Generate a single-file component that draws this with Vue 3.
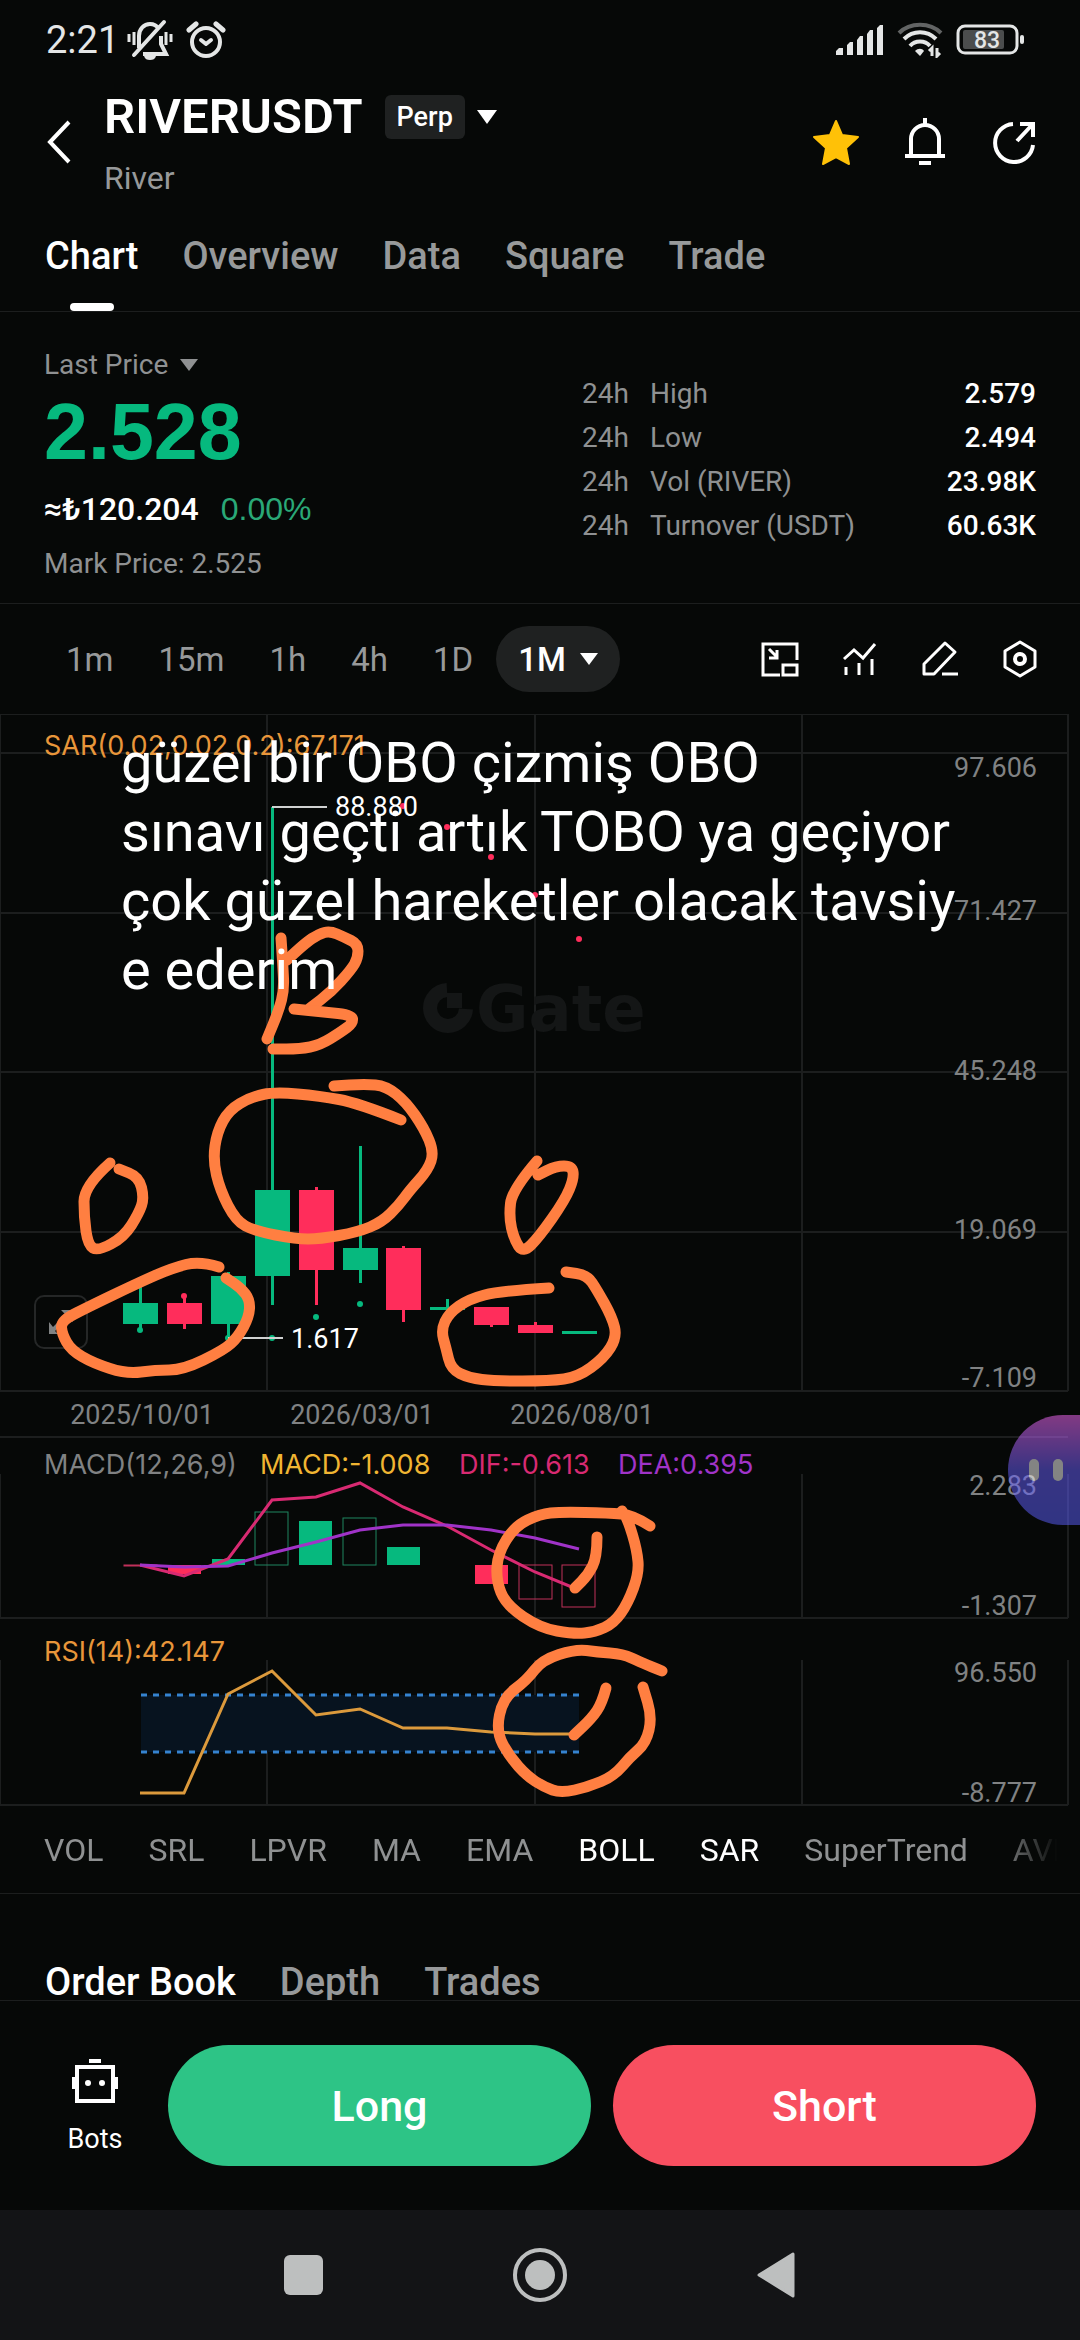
<template>
  <div class="screen">
    <header class="status">
      <div class="status-side">
        <span class="clock">2:21</span>
        <svg width="46" height="42" viewBox="0 0 46 42" aria-hidden="true">
          <g fill="none" stroke="#e4e6e6" stroke-width="4">
            <path d="M12 29V17c0-7 5-12 11-12 4 0 7 2 9 5M34 17v8l5 10H16" />
            <path d="M7 36 37 3" stroke-linecap="round" />
            <path d="M2 15v8M7 13v13M39 13v13M44 15v8" stroke-width="3" />
          </g>
          <path d="M17 37h12c-1 3-3 4-6 4s-5-1-6-4z" fill="#e4e6e6" />
        </svg>
        <svg width="40" height="40" viewBox="0 0 40 40" aria-hidden="true">
          <g fill="none" stroke="#e4e6e6" stroke-width="4" stroke-linecap="round" stroke-linejoin="round">
            <circle cx="20" cy="22" r="14" />
            <path d="M3 10 10 4M37 10 30 4" stroke-width="5" />
            <path d="m15 20 5 4 5-4" />
          </g>
        </svg>
      </div>
      <div class="status-side">
        <svg width="48" height="32" viewBox="0 0 48 32" fill="#e4e6e6" aria-hidden="true">
          <path d="M0 31v-4l3-3h4v7zM11 31V21l3-3h3v13zM21 31V16l3-4h3v19zM31 31V10l3-4h3v25zM41 31V4l3-3h3v30z" />
        </svg>
        <svg width="46" height="36" viewBox="0 0 46 36" aria-hidden="true">
          <g fill="none" stroke="#e4e6e6" stroke-width="4">
            <path d="M2 11c11-11 31-11 42 0" stroke="#626464" />
            <path d="M7 17c9-9 23-9 32 0M13 24c5-6 15-6 20 0" />
            <path d="M35 34v-8l-3 3M40 26v8l3-3" stroke-width="3" />
          </g>
          <path d="M18 29c3-3 7-3 9 0l-4 5z" fill="#e4e6e6" />
        </svg>
        <svg width="70" height="32" viewBox="0 0 70 32" aria-hidden="true">
          <rect x="2" y="2" width="59" height="27" rx="7" fill="none" stroke="#e4e6e6" stroke-width="3" />
          <rect x="7" y="6" width="41" height="19" rx="2" fill="#4b4d4d" />
          <rect x="64" y="11" width="4" height="9" rx="2" fill="#e4e6e6" />
          <text x="31" y="24" class="battery">83</text>
        </svg>
      </div>
    </header>

    <div class="titlebar">
      <button class="plain" aria-label="Back">
        <svg width="26" height="44" viewBox="0 0 26 44"><path d="M23 2 4 22l19 20" fill="none" stroke="#fff" stroke-width="4" /></svg>
      </button>
      <div class="pair">
        <h1>RIVERUSDT</h1>
        <button class="plain contract"><span class="badge">Perp</span><i class="caret big"></i></button>
        <p>River</p>
      </div>
      <div class="title-icons">
        <button class="plain" aria-label="Favorite">
          <svg width="48" height="48" viewBox="0 0 48 48">
            <path d="m24 3 6 14 16 2-12 11 3 16-13-7-13 7 3-16L2 19l16-2z" fill="#ffc107" stroke="#ffc107" stroke-width="2" stroke-linejoin="round" />
          </svg>
        </button>
        <button class="plain" aria-label="Alerts">
          <svg width="48" height="48" viewBox="0 0 48 48" fill="none" stroke="#fff" stroke-width="4">
            <path d="M10 39V21a14 14 0 0 1 28 0v18M4 38h40M18 45h12M24 0v8" />
          </svg>
        </button>
        <button class="plain" aria-label="Share">
          <svg width="48" height="48" viewBox="0 0 48 48" fill="none" stroke="#fff" stroke-width="4">
            <path d="M23 6a19 19 0 1 0 20 21M27 23 41 8M30 6h13v13" />
          </svg>
        </button>
      </div>
    </div>

    <nav class="tabs">
      <a v-for="(tab, i) in tabs" :key="tab" href="#" :class="{ active: i === 0 }">{{ tab }}</a>
    </nav>

    <section class="summary">
      <div class="price">
        <button class="plain last">Last Price<i class="caret"></i></button>
        <strong>2.528</strong>
        <div class="fiat"><b>≈₺120.204</b><span>0.00%</span></div>
        <p>Mark Price: 2.525</p>
      </div>
      <table class="stats">
        <tbody>
          <tr v-for="row in stats" :key="row[0]">
            <td class="period">24h</td>
            <th scope="row">{{ row[0] }}</th>
            <td class="value">{{ row[1] }}</td>
          </tr>
        </tbody>
      </table>
    </section>

    <div class="toolbar">
      <div class="frames">
        <button v-for="f in frames" :key="f" class="plain">{{ f }}</button>
        <button class="plain pill">1M<i class="caret"></i></button>
      </div>
      <div class="tools">
        <button class="plain" aria-label="Picture in picture">
          <svg width="40" height="40" viewBox="0 0 40 40" fill="none" stroke="#fff" stroke-width="3">
            <path d="M20 36H3V5h34v16M23 26h14v10H23zM9 10l8 8M17 11v8H9" />
          </svg>
        </button>
        <button class="plain" aria-label="Indicators">
          <svg width="40" height="40" viewBox="0 0 40 40" fill="none" stroke="#fff" stroke-width="3">
            <path d="m4 20 10-9 9 8L35 5M6 28v8M19 24v12M32 20v16" />
          </svg>
        </button>
        <button class="plain" aria-label="Draw">
          <svg width="40" height="40" viewBox="0 0 40 40" fill="none" stroke="#fff" stroke-width="3">
            <path d="M4 35V25L25 4l10 9-21 22zM22 35h16" stroke-linejoin="round" />
          </svg>
        </button>
        <button class="plain" aria-label="Chart settings">
          <svg width="40" height="40" viewBox="0 0 40 40" fill="none" stroke="#fff" stroke-width="3">
            <path d="m20 3 15 9v16l-15 9-15-9V12z" stroke-linejoin="round" />
            <circle cx="20" cy="20" r="5" stroke-width="4" />
          </svg>
        </button>
      </div>
    </div>

    <section class="chart">
      <svg class="plot" viewBox="0 0 1080 1092" role="img" aria-label="RIVERUSDT monthly chart">
        <!-- grid -->
        <g class="grid">
          <line v-for="y in gridY" :key="'h' + y" x1="0" x2="1068" :y1="y" :y2="y" />
          <template v-for="x in gridX" :key="'v' + x">
            <line v-for="p in panes" :key="p[0]" :x1="x" :x2="x" :y1="p[0]" :y2="p[1]" />
          </template>
        </g>

        <!-- watermark -->
        <g class="watermark">
          <path d="M447 276a18 18 0 1 0 19 19" />
          <rect x="447" y="279" width="15" height="15" />
          <text x="476" y="317">Gate</text>
        </g>

        <!-- candles -->
        <g v-for="(c, i) in candles" :key="'c' + i" :class="c.up ? 'up' : 'down'">
          <rect :x="xs[i] - 1" :y="c.high" width="3" :height="c.low - c.high" />
          <rect class="body" :x="xs[i] - 17" :y="c.top" width="35" :height="c.bottom - c.top" />
        </g>
        <circle v-for="(d, i) in sar" :key="'s' + i" :cx="xs[i]" :cy="d[0]" r="3" :class="d[1]" />

        <g class="marks">
          <path d="M272 93h55M228 624h55" />
          <text x="335" y="102">88.880</text>
          <text x="291" y="634">1.617</text>
        </g>

        <!-- macd -->
        <rect
          v-for="b in bars" :key="'b' + b.x" :x="b.x" :y="b.y" width="33" :height="b.h"
          :class="['bar', b.up ? 'up' : 'down', { hollow: b.hollow }]"
        />
        <polyline class="dif" :points="line(dif)" />
        <polyline class="dea" :points="line(dea)" />

        <!-- rsi -->
        <rect class="band" x="141" y="981" width="438" height="57" />
        <path class="limits" d="M141 981h438M141 1038h438" />
        <polyline class="rsi" :points="line(rsi)" />

        <text v-for="l in axis" :key="l[0]" class="label" x="1037" :y="l[1]" text-anchor="end">{{ l[0] }}</text>
        <text v-for="d in dates" :key="d[0]" class="label" :x="d[1]" y="710" text-anchor="middle">{{ d[0] }}</text>
        <text v-for="l in legends" :key="l.text" :class="['legend', l.cls]" :x="l.x" :y="l.y">{{ l.text }}</text>
      </svg>

      <button class="plain expand" aria-label="Full screen">
        <svg width="28" height="28" viewBox="0 0 28 28" fill="#808283"><path d="M14 2h12v12zM2 14v12h9l-3-3 5-5-3-3-4 4z" /></svg>
      </button>

      <svg class="plot ink" viewBox="0 0 1080 1092" aria-hidden="true">
        <path v-for="(s, i) in strokes" :key="i" :d="smooth(s)" />
      </svg>

      <p class="note"><span v-for="n in note" :key="n">{{ n }}</span></p>

      <button class="plain assistant" aria-label="Assistant"><i></i><i></i></button>
    </section>

    <nav class="indicators">
      <button v-for="n in indicators" :key="n" class="plain" :class="{ on: n === 'BOLL' || n === 'SAR' }">{{ n }}</button>
    </nav>

    <nav class="book">
      <a href="#" class="active">Order Book</a>
      <a href="#">Depth</a>
      <a href="#">Trades</a>
    </nav>

    <div class="actions">
      <button class="plain bots">
        <svg width="48" height="48" viewBox="0 0 48 48" fill="none" stroke="#fff" stroke-width="4">
          <path d="M6 10h36v34H6zM18 4h12M3 20v12M45 20v12" />
          <circle cx="17" cy="26" r="3" fill="#fff" stroke="none" />
          <circle cx="31" cy="26" r="3" fill="#fff" stroke="none" />
        </svg>
        Bots
      </button>
      <button class="trade long">Long</button>
      <button class="trade short">Short</button>
    </div>

    <nav class="system">
      <button class="plain" aria-label="Recents"><svg width="56" height="56" viewBox="0 0 56 56"><rect x="9" y="8" width="39" height="40" rx="6" fill="#bdbfbf" /></svg></button>
      <button class="plain" aria-label="Home">
        <svg width="56" height="56" viewBox="0 0 56 56">
          <circle cx="28" cy="28" r="25" fill="none" stroke="#bdbfbf" stroke-width="4" />
          <circle cx="28" cy="28" r="15" fill="#bdbfbf" />
        </svg>
      </button>
      <button class="plain" aria-label="Go back"><svg width="56" height="56" viewBox="0 0 56 56"><path d="M44 7v42L10 28z" fill="#bdbfbf" stroke="#bdbfbf" stroke-width="3" stroke-linejoin="round" /></svg></button>
    </nav>
  </div>
</template>

<script setup>
const tabs = ["Chart", "Overview", "Data", "Square", "Trade"];
const stats = [
  ["High", "2.579"],
  ["Low", "2.494"],
  ["Vol (RIVER)", "23.98K"],
  ["Turnover (USDT)", "60.63K"],
];
const frames = ["1m", "15m", "1h", "4h", "1D"];
const indicators = ["VOL", "SRL", "LPVR", "MA", "EMA", "BOLL", "SAR", "SuperTrend", "AVL"];

const gridY = [0, 39, 199, 358, 518, 677, 723, 904, 1091];
const gridX = [0, 267, 535, 802, 1068];
const panes = [[0, 677], [760, 904], [946, 1091]];

const xs = [140, 184, 228, 272, 316, 360, 403, 447, 491, 535, 579];
const candles = [
  { up: true, high: 572, top: 589, bottom: 610, low: 616 },
  { up: false, high: 582, top: 589, bottom: 610, low: 615 },
  { up: true, high: 558, top: 562, bottom: 610, low: 624 },
  { up: true, high: 93, top: 476, bottom: 562, low: 591 },
  { up: false, high: 473, top: 476, bottom: 556, low: 591 },
  { up: true, high: 432, top: 534, bottom: 556, low: 569 },
  { up: false, high: 532, top: 534, bottom: 596, low: 608 },
  { up: true, high: 585, top: 593, bottom: 596, low: 596 },
  { up: false, high: 593, top: 593, bottom: 611, low: 613 },
  { up: false, high: 608, top: 611, bottom: 619, low: 619 },
  { up: true, high: 617, top: 617, bottom: 620, low: 620 },
];
const sar = [
  [616, "up"], [582, "down"], [624, "up"], [624, "up"], [603, "up"], [590, "up"],
  [92, "down"], [113, "down"], [143, "down"], [181, "down"], [225, "down"],
];

const bars = [
  { x: 124, y: 851, h: 1, up: false, hollow: true },
  { x: 168, y: 851, h: 9, up: false },
  { x: 212, y: 845, h: 6, up: true },
  { x: 255, y: 798, h: 53, up: true, hollow: true },
  { x: 299, y: 807, h: 44, up: true },
  { x: 343, y: 804, h: 47, up: true, hollow: true },
  { x: 387, y: 833, h: 18, up: true },
  { x: 475, y: 851, h: 19, up: false },
  { x: 519, y: 851, h: 34, up: false, hollow: true },
  { x: 562, y: 851, h: 42, up: false, hollow: true },
];
const dif = [851, 862, 845, 786, 783, 769, 793, 812, 836, 858, 876];
const dea = [851, 853, 852, 839, 828, 816, 811, 811, 816, 824, 835];
const rsi = [1079, 1079, 980, 957, 1001, 995, 1014, 1014, 1018, 1020, 1020];

const axis = [
  ["97.606", 63], ["71.427", 206], ["45.248", 366], ["19.069", 525], ["-7.109", 673],
  ["2.283", 781], ["-1.307", 901], ["96.550", 968], ["-8.777", 1088],
];
const dates = [["2025/10/01", 142], ["2026/03/01", 362], ["2026/08/01", 582]];
const legends = [
  { text: "SAR(0.02,0.02,0.2):67.171", x: 44, y: 41, cls: "orange" },
  { text: "MACD(12,26,9)", x: 44, y: 760, cls: "grey" },
  { text: "MACD:-1.008", x: 260, y: 760, cls: "yellow" },
  { text: "DIF:-0.613", x: 459, y: 760, cls: "pink" },
  { text: "DEA:0.395", x: 618, y: 760, cls: "purple" },
  { text: "RSI(14):42.147", x: 44, y: 947, cls: "orange" },
];

const note = [
  "güzel bir OBO çizmiş OBO",
  "sınavı geçti artık TOBO ya geçiyor",
  "çok güzel hareketler olacak tavsiy",
  "e ederim",
];

// freehand pen strokes
const strokes = [
  [[281, 224], [283, 253], [284, 276], [279, 296], [267, 325]],
  [[287, 246], [305, 229], [319, 220], [330, 217], [344, 223], [358, 230], [358, 244], [351, 256], [331, 278], [310, 294]],
  [[294, 295], [324, 298], [352, 301], [353, 309], [341, 318], [320, 331], [300, 335], [273, 335]],
  [[401, 406], [358, 389], [320, 382], [275, 378], [251, 383], [229, 396], [217, 418], [213, 446], [220, 476], [236, 507], [255, 517], [296, 525], [320, 525], [358, 518], [382, 508], [399, 491], [410, 476], [428, 456], [434, 438], [424, 414], [406, 388], [386, 372], [365, 370], [334, 372]],
  [[110, 449], [84, 472], [84, 503], [88, 531], [98, 537], [124, 523], [139, 499], [144, 484], [139, 463], [119, 455]],
  [[219, 553], [200, 547], [172, 554], [138, 569], [86, 594], [61, 607], [62, 620], [71, 636], [93, 649], [127, 660], [155, 656], [183, 656], [224, 636], [238, 623], [249, 603], [250, 586], [241, 574], [226, 564]],
  [[537, 447], [512, 476], [509, 503], [514, 525], [523, 539], [539, 523], [565, 486], [574, 464], [572, 452], [556, 452], [538, 461]],
  [[549, 574], [500, 577], [469, 585], [449, 599], [441, 616], [446, 634], [451, 655], [469, 664], [495, 667], [550, 667], [578, 663], [604, 644], [617, 623], [612, 603], [597, 576], [587, 561], [566, 558]],
  [[650, 812], [633, 801], [609, 799], [561, 798], [540, 800], [515, 812], [498, 839], [496, 866], [506, 891], [540, 914], [574, 920], [595, 918], [614, 909], [628, 889], [639, 859], [637, 836], [628, 806], [622, 797]],
  [[597, 823], [597, 843], [588, 861], [575, 874]],
  [[662, 957], [640, 948], [623, 940], [597, 938], [576, 935], [542, 946], [527, 966], [503, 984], [496, 1018], [510, 1043], [527, 1062], [544, 1073], [561, 1079], [588, 1073], [614, 1062], [630, 1043], [646, 1029], [652, 1003], [643, 973]],
  [[606, 974], [602, 989], [592, 1004], [574, 1021]],
];

const line = (ys) => ys.map((y, i) => `${xs[i]},${y}`).join(" ");

function smooth(pts) {
  let d = `M${pts[0][0]} ${pts[0][1]}`;
  for (let i = 1; i < pts.length - 1; i++) {
    const [x, y] = pts[i];
    const [nx, ny] = pts[i + 1];
    d += ` Q${x} ${y} ${(x + nx) / 2} ${(y + ny) / 2}`;
  }
  const last = pts[pts.length - 1];
  return `${d} L${last[0]} ${last[1]}`;
}
</script>

<style>
body {
  margin: 0;
  background: #060807;
}
</style>

<style scoped>
.screen {
  background: #060807;
  color: #fff;
  font-family: Roboto, "Liberation Sans", sans-serif;
  overflow: hidden;
}

.screen * {
  box-sizing: border-box;
}

.plain {
  display: flex;
  align-items: center;
  padding: 0;
  border: 0;
  background: none;
  color: inherit;
  font: inherit;
}

svg {
  display: block;
  flex: none;
}

a {
  color: #97999a;
  text-decoration: none;
}

.caret {
  border: 9px solid transparent;
  border-top: 12px solid currentColor;
  border-bottom: 0;
}

.caret.big {
  border-width: 14px 10px 0;
}

/* status bar */
.status {
  display: flex;
  justify-content: space-between;
  height: 80px;
  padding: 0 54px 0 46px;
}

.status-side {
  display: flex;
  align-items: center;
  gap: 13px;
}

.clock {
  margin-right: -5px;
  color: #e4e6e6;
  font-size: 38px;
  line-height: 44px;
}

.battery {
  fill: #e4e6e6;
  font-size: 23px;
  font-weight: 500;
  text-anchor: middle;
}

/* title */
.titlebar {
  display: flex;
  align-items: center;
  height: 124px;
  padding: 0 42px 0 46px;
}

.pair {
  display: grid;
  grid-template-columns: auto 1fr;
  column-gap: 22px;
  align-items: center;
  margin-left: 32px;
}

h1 {
  margin: 0;
  font-size: 49px;
  font-weight: 600;
  line-height: 72px;
}

.pair p {
  margin: 0;
  color: #97999a;
  font-size: 32px;
  line-height: 50px;
}

.contract {
  gap: 12px;
}

.badge {
  padding: 0 12px;
  border-radius: 6px;
  background: #1f2121;
  font-size: 27px;
  font-weight: 500;
  line-height: 44px;
}

.title-icons {
  display: flex;
  gap: 41px;
  margin-left: auto;
}

/* tabs */
.tabs {
  display: flex;
  gap: 44px;
  height: 108px;
  padding: 0 45px;
  border-bottom: 1px solid #1c1e1e;
  font-size: 38px;
  font-weight: 500;
  line-height: 104px;
}

.active {
  color: #fff;
}

.tabs .active {
  display: flex;
  flex-direction: column;
  align-items: center;
}

.tabs .active::after {
  content: "";
  width: 44px;
  height: 8px;
  margin-top: -5px;
  border-radius: 4px;
  background: #fff;
}

/* price summary */
.summary {
  display: flex;
  justify-content: space-between;
  height: 292px;
  padding: 31px 44px 0;
  border-bottom: 1px solid #1c1e1e;
  color: #8f9192;
  font-size: 28px;
}

.last {
  gap: 12px;
  line-height: 44px;
}

.price strong {
  display: block;
  color: #06b97e;
  font-family: "Liberation Sans", sans-serif;
  font-size: 79px;
  line-height: 90px;
}

.fiat {
  display: flex;
  gap: 22px;
  color: #2aa877;
  font-size: 32px;
  line-height: 64px;
}

.fiat b {
  color: #fff;
  font-weight: 500;
}

.fiat span {
  font-family: "Liberation Sans", sans-serif;
}

.price p {
  margin: 0;
  line-height: 46px;
}

.stats {
  align-self: flex-start;
  width: 454px;
  margin-top: 29px;
  border-collapse: collapse;
  line-height: 44px;
}

.stats td,
.stats th {
  padding: 0;
  font-weight: 400;
  text-align: left;
}

.stats .period {
  width: 68px;
}

.stats .value {
  color: #fff;
  font-weight: 500;
  text-align: right;
}

/* timeframes */
.toolbar {
  display: flex;
  align-items: center;
  justify-content: space-between;
  height: 110px;
  padding: 0 40px 0 66px;
  color: #97999a;
  font-size: 33px;
}

.frames {
  display: flex;
  gap: 45px;
}

.frames .pill {
  gap: 14px;
  height: 66px;
  margin-left: -22px;
  padding: 0 22px;
  border-radius: 33px;
  background: #1f2121;
  color: #fff;
  font-weight: 500;
}

.tools {
  display: flex;
  gap: 40px;
}

/* chart */
.chart {
  position: relative;
}

.plot {
  width: 100%;
  height: auto;
}

.grid line {
  stroke: #1c1e1e;
  stroke-width: 2;
}

.watermark {
  fill: #141616;
}

.watermark path {
  fill: none;
  stroke: #141616;
  stroke-width: 14;
}

.watermark text {
  font-family: "DejaVu Sans", sans-serif;
  font-size: 64px;
  font-weight: 700;
}

.up {
  fill: #06b97e;
}

.down {
  fill: #ff2d5b;
}

.marks path {
  stroke: #cfd1d1;
  stroke-width: 2;
}

.marks text {
  fill: #fff;
  font-size: 27px;
}

.bar.hollow {
  fill: none;
  stroke: #c0305a;
}

.bar.hollow.up {
  stroke: #1e8560;
}

polyline {
  fill: none;
  stroke-width: 3;
}

.dif {
  stroke: #d82a72;
}

.dea {
  stroke: #a033c8;
}

.rsi {
  stroke: #dc9a3c;
}

.band {
  fill: #07131f;
}

.limits {
  stroke: #3583d0;
  stroke-width: 3;
  stroke-dasharray: 6;
}

.label {
  fill: #808283;
  font-size: 27px;
}

.legend {
  font-family: Inter, sans-serif;
  font-size: 27px;
}

.grey {
  fill: #808283;
}

.orange {
  fill: #e8963a;
}

.yellow {
  fill: #f0b532;
}

.pink {
  fill: #d82a72;
}

.purple {
  fill: #a033c8;
}

.expand {
  position: absolute;
  left: 34px;
  top: 581px;
  justify-content: center;
  width: 54px;
  height: 54px;
  border: 2px solid #252727;
  border-radius: 10px;
}

.ink {
  position: absolute;
  inset: 0;
}

.ink path {
  fill: none;
  stroke: #ff7f41;
  stroke-width: 11;
  stroke-linecap: round;
  stroke-linejoin: round;
}

.note {
  position: absolute;
  left: 121px;
  top: 15px;
  margin: 0;
  font-size: 56px;
  line-height: 69px;
  white-space: nowrap;
}

.note span {
  display: block;
}

.assistant {
  position: absolute;
  right: 0;
  top: 701px;
  gap: 14px;
  width: 72px;
  height: 110px;
  padding-left: 21px;
  border-radius: 55px 0 0 55px;
  background: linear-gradient(#fe6cff, #6a60ff 50%, #5c60ff);
  opacity: 0.5;
}

.assistant i {
  width: 10px;
  height: 22px;
  border-radius: 5px;
  background: #fff;
}

/* indicators */
.indicators {
  display: flex;
  gap: 45px;
  height: 87px;
  margin-right: 22px;
  padding-left: 44px;
  overflow: hidden;
  color: #8f9192;
  font-size: 32px;
  -webkit-mask-image: linear-gradient(90deg, #000 94%, transparent);
  mask-image: linear-gradient(90deg, #000 94%, transparent);
}

.indicators .on {
  color: #fff;
}

/* order book tabs */
.book {
  display: flex;
  align-items: flex-end;
  gap: 44px;
  height: 108px;
  padding: 0 45px;
  overflow: hidden;
  border-top: 1px solid #1c1e1e;
  border-bottom: 1px solid #1c1e1e;
  font-size: 38px;
  font-weight: 500;
  line-height: 36px;
}

/* bottom actions */
.actions {
  display: flex;
  align-items: center;
  gap: 22px;
  height: 209px;
  padding: 0 44px;
}

.bots {
  flex-direction: column;
  gap: 18px;
  width: 102px;
  font-size: 27px;
}

.trade {
  flex: 1;
  height: 121px;
  border: 0;
  border-radius: 61px;
  color: #fff;
  font-family: inherit;
  font-size: 43px;
  font-weight: 500;
}

.long {
  background: #2dc486;
}

.short {
  background: #f84f60;
}

.system {
  display: flex;
  align-items: center;
  justify-content: center;
  gap: 181px;
  height: 130px;
  background: #131416;
}
</style>
